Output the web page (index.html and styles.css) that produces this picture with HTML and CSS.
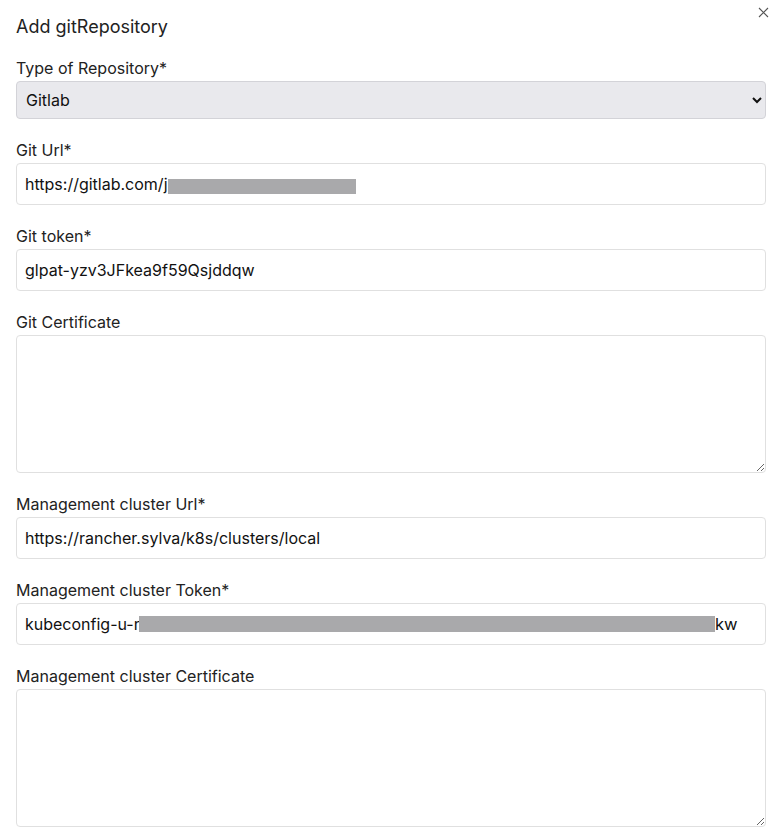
FILE: index.html
```html
<!DOCTYPE html>
<html lang="en">
<head>
    <meta charset="UTF-8">
    <meta name="viewport" content="width=device-width, initial-scale=1.0">
    <title>Add gitRepository</title>
    <link rel="stylesheet" href="styles.css">
</head>
<body>
    <div class="modal">
        <button class="close" aria-label="Close">
            <svg width="11" height="11" viewBox="0 0 11 11"><path d="M1 1L10 10M10 1L1 10" stroke="#555" stroke-width="1.1" fill="none"/></svg>
        </button>
        <h2>Add gitRepository</h2>

        <div class="field">
            <label for="repoType">Type of Repository*</label>
            <select id="repoType">
                <option>Gitlab</option>
                <option>Github</option>
            </select>
        </div>

        <div class="field">
            <label for="gitUrl">Git Url*</label>
            <div class="masked">
                <input type="text" id="gitUrl" value="https://gitlab.com/j">
                <span class="redact url-redact"></span>
            </div>
        </div>

        <div class="field">
            <label for="gitToken">Git token*</label>
            <input type="text" id="gitToken" value="glpat-yzv3JFkea9f59Qsjddqw">
        </div>

        <div class="field">
            <label for="gitCert">Git Certificate</label>
            <textarea id="gitCert"></textarea>
        </div>

        <div class="field">
            <label for="mgmtUrl">Management cluster Url*</label>
            <input type="text" id="mgmtUrl" value="https://rancher.sylva/k8s/clusters/local">
        </div>

        <div class="field">
            <label for="mgmtToken">Management cluster Token*</label>
            <div class="masked">
                <input type="text" id="mgmtToken" value="kubeconfig-u-r">
                <span class="token-tail"><span class="redact token-redact"></span>kw</span>
            </div>
        </div>

        <div class="field">
            <label for="mgmtCert">Management cluster Certificate</label>
            <textarea id="mgmtCert"></textarea>
        </div>
    </div>
</body>
</html>
```

FILE: styles.css
```css
* {
    margin: 0;
    padding: 0;
    box-sizing: border-box;
    font-family: 'Inter', 'Liberation Sans', sans-serif;
}
body {
    background: #fff;
    color: #1a1a1a;
}
.modal {
    position: relative;
    padding: 15px 11px 0 16px;
}
.close {
    position: absolute;
    top: 7px;
    right: 8px;
    background: none;
    border: none;
    cursor: pointer;
    line-height: 0;
}
h2 {
    font-size: 18px;
    font-weight: 400;
    line-height: 24px;
    margin-bottom: 19px;
    color: #222;
}
.field {
    margin-bottom: 21px;
}
label {
    display: block;
    font-size: 16px;
    line-height: 20px;
    margin-bottom: 3px;
    color: #222;
}
select, input, textarea {
    display: block;
    width: 100%;
    font-size: 16px;
    color: #111;
    border-radius: 4px;
    outline: none;
}
select {
    height: 38px;
    padding: 0 5px;
    background: #e9e9ed;
    border: 1px solid #d3d3d8;
}
input {
    height: 42px;
    padding: 0 8px;
    background: #fff;
    border: 1px solid #e0e0e0;
}
textarea {
    height: 138px;
    padding: 8px 8px;
    border: 1px solid #e0e0e0;
    resize: vertical;
}
.masked {
    position: relative;
}
.redact {
    display: block;
    background: #a9a9ab;
}
.url-redact {
    position: absolute;
    left: 152px;
    top: 16px;
    width: 188px;
    height: 15px;
}
.token-tail {
    position: absolute;
    left: 123px;
    top: 11px;
    display: flex;
    align-items: center;
    font-size: 16.5px;
    line-height: 20px;
    color: #111;
}
.token-redact {
    width: 576px;
    height: 16px;
}
```
